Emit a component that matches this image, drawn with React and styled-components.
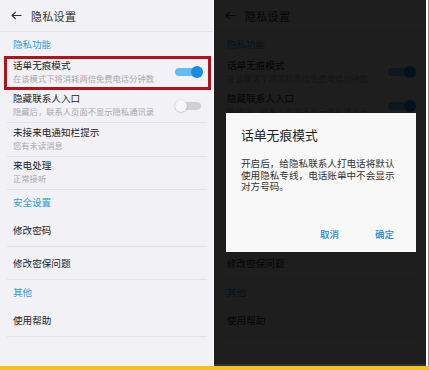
import styled, { createGlobalStyle } from "styled-components";

const GlobalStyle = createGlobalStyle`
  html, body {
    margin: 0;
    padding: 0;
    background: #ffffff;
  }
  body {
    font-family: "Noto Sans CJK SC", "Noto Sans", sans-serif;
  }
`;

const sections = [
  {
    title: "隐私功能",
    items: [
      {
        title: "话单无痕模式",
        sub: "在该模式下将消耗两倍免费电话分钟数",
        toggle: true,
        highlight: true,
      },
      {
        title: "隐藏联系人入口",
        sub: "隐藏后，联系人页面不显示隐私通讯录",
        toggle: false,
      },
      { title: "未接来电通知栏提示", sub: "您有未读消息" },
      { title: "来电处理", sub: "正常接听" },
    ],
  },
  {
    title: "安全设置",
    items: [{ title: "修改密码" }, { title: "修改密保问题" }],
  },
  {
    title: "其他",
    items: [{ title: "使用帮助" }],
  },
];

function BackArrow() {
  return (
    <svg width="11" height="9" viewBox="0 0 11 9">
      <path
        d="M10.5 4.5H1.2M4.8 0.8L1.1 4.5l3.7 3.7"
        fill="none"
        stroke="#333"
        strokeWidth="1.2"
      />
    </svg>
  );
}

function SettingsScreen({ allOn, annotate }) {
  return (
    <>
      <Header>
        <BackArrow />
        <HeaderTitle>隐私设置</HeaderTitle>
      </Header>
      {sections.map((section) => (
        <section key={section.title}>
          <SectionTitle>{section.title}</SectionTitle>
          {section.items.map((item) => {
            const on = allOn ? true : item.toggle;
            return (
              <Row key={item.title} $tall={!!item.sub}>
                <RowText>
                  <RowTitle>{item.title}</RowTitle>
                  {item.sub && <RowSub>{item.sub}</RowSub>}
                </RowText>
                {item.toggle !== undefined && (
                  <Toggle>
                    <Track $on={on} />
                    <Knob $on={on} />
                  </Toggle>
                )}
                {annotate && item.highlight && <Highlight />}
              </Row>
            );
          })}
        </section>
      ))}
    </>
  );
}

export default function App() {
  return (
    <>
      <GlobalStyle />
      <Page>
        <Panels>
          <Panel $width={213}>
            <SettingsScreen annotate />
          </Panel>
          <Panel $width={212} $dark>
            <SettingsScreen allOn />
            <Dim />
            <Dialog>
              <DialogTitle>话单无痕模式</DialogTitle>
              <DialogBody>
                开启后，给隐私联系人打电话将默认
                <br />
                使用隐私专线，电话账单中不会显示
                <br />
                对方号码。
              </DialogBody>
              <DialogActions>
                <DialogButton>取消</DialogButton>
                <DialogButton>确定</DialogButton>
              </DialogActions>
            </Dialog>
          </Panel>
          <Edge />
        </Panels>
        <Strip />
      </Page>
    </>
  );
}

const Page = styled.div`
  width: 429px;
  height: 370px;
  display: flex;
  flex-direction: column;
  overflow: hidden;
`;

const Panels = styled.div`
  display: flex;
  gap: 1px;
  height: 366px;
`;

const Panel = styled.div`
  position: relative;
  width: ${({ $width }) => $width}px;
  height: 366px;
  flex-shrink: 0;
  overflow: hidden;
  background: #f2f1f5;
  box-sizing: border-box;
  ${({ $dark }) => ($dark ? "border-bottom: 2px solid #2b3344;" : "")}
`;

const Edge = styled.div`
  flex: 1;
  background: #8d8d90;
  margin-left: 1px;
`;

const Strip = styled.div`
  height: 4px;
  background: #f6c21a;
`;

const Header = styled.div`
  height: 32px;
  box-sizing: border-box;
  display: flex;
  align-items: center;
  gap: 9px;
  padding: 0 0 0 11px;
  border-bottom: 1px solid #e2e1e6;
`;

const HeaderTitle = styled.span`
  font-size: 11px;
  color: #333;
  letter-spacing: 0.3px;
`;

const SectionTitle = styled.div`
  height: 24px;
  display: flex;
  align-items: center;
  padding-left: 13px;
  font-size: 9.5px;
  color: #2a9fdb;
`;

const Row = styled.div`
  position: relative;
  height: ${({ $tall }) => ($tall ? 33.5 : 33)}px;
  margin: 0 6px 0 7px;
  padding: 0 4px ${({ $tall }) => ($tall ? 3 : 1)}px 6px;
  box-sizing: border-box;
  display: flex;
  align-items: center;
  justify-content: space-between;
  border-bottom: 1px solid #e3e2e7;
`;

const RowText = styled.div`
  display: flex;
  flex-direction: column;
  gap: 2px;
`;

const RowTitle = styled.span`
  font-size: 9.6px;
  line-height: 12px;
  color: #222;
`;

const RowSub = styled.span`
  font-size: 8.3px;
  line-height: 10px;
  color: #a8a7ac;
`;

const Toggle = styled.div`
  position: relative;
  width: 28px;
  height: 12px;
  margin-top: 3px;
`;

const Track = styled.div`
  position: absolute;
  left: 0;
  right: 2px;
  top: 2px;
  height: 8px;
  border-radius: 4px;
  background: ${({ $on }) => ($on ? "#63bdf0" : "#cfcfd4")};
`;

const Knob = styled.div`
  position: absolute;
  top: 0;
  ${({ $on }) => ($on ? "right: 0;" : "left: 0;")}
  width: 12px;
  height: 12px;
  border-radius: 50%;
  background: ${({ $on }) => ($on ? "#1a8de0" : "#f7f7f8")};
  box-shadow: ${({ $on }) => ($on ? "none" : "0 0.5px 1.5px rgba(0,0,0,0.3)")};
`;

const Highlight = styled.div`
  position: absolute;
  left: -3px;
  right: -4px;
  top: 0;
  bottom: -1px;
  border: 3px solid #b2121c;
  pointer-events: none;
`;

const Dim = styled.div`
  position: absolute;
  inset: 0;
  background: rgba(0, 0, 0, 0.88);
`;

const Dialog = styled.div`
  position: absolute;
  left: 12px;
  top: 113px;
  width: 190px;
  height: 139px;
  box-sizing: border-box;
  padding: 14px 22px 12px 15px;
  background: #f8f8f8;
  display: flex;
  flex-direction: column;
`;

const DialogTitle = styled.div`
  font-size: 12.8px;
  line-height: 16px;
  color: #1d1d1d;
`;

const DialogBody = styled.div`
  margin-top: 15px;
  font-size: 9.6px;
  line-height: 11.6px;
  color: #333;
  white-space: nowrap;
`;

const DialogActions = styled.div`
  margin-top: auto;
  display: flex;
  justify-content: flex-end;
  gap: 36px;
`;

const DialogButton = styled.span`
  font-size: 9.5px;
  line-height: 12px;
  color: #1f87d6;
  font-weight: 500;
`;
